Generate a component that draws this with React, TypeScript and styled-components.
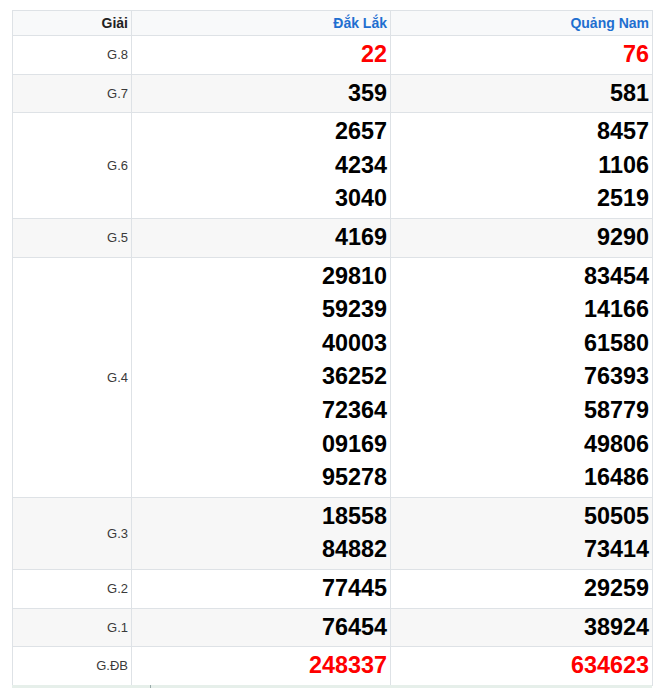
import React from "react";
import styled, { createGlobalStyle } from "styled-components";

const Global = createGlobalStyle`
  html, body { margin: 0; padding: 0; background: #fff; }
  body { font-family: "Liberation Sans", Arial, sans-serif; }
`;

const Wrap = styled.div`
  padding: 10px 11px 0 12px;
`;

const Table = styled.table`
  width: 640px;
  border-collapse: collapse;
  table-layout: fixed;
  font-family: "Liberation Sans", Arial, sans-serif;
`;

const HeadCell = styled.th<{ $blue?: boolean }>`
  border: 1px solid #dee2e6;
  background: #f8f9fa;
  text-align: right;
  font-size: 14px;
  font-weight: bold;
  line-height: 20px;
  padding: 2px 3px 2px 3px;
  color: ${(p) => (p.$blue ? "#1f6fd0" : "#222")};
`;

const Row = styled.tr<{ $alt: boolean }>`
  background: ${(p) => (p.$alt ? "#f7f7f7" : "#fff")};
`;

const Label = styled.td`
  border: 1px solid #dee2e6;
  text-align: right;
  vertical-align: middle;
  font-size: 13px;
  color: #3a3a3a;
  padding: 2px 3px;
`;

const NumCell = styled.td`
  border: 1px solid #dee2e6;
  text-align: right;
  vertical-align: middle;
  padding: 2px 3px 2px 3px;
`;

const Num = styled.div<{ $red?: boolean }>`
  font-size: 23.4px;
  line-height: 33.6px;
  font-weight: bold;
  color: ${(p) => (p.$red ? "#f00" : "#000")};
`;

const Footer = styled.div`
  width: 640px;
  height: 3px;
  background: #e6efea;
  position: relative;
  margin-top: -1px;
`;

const Tick = styled.span`
  position: absolute;
  left: 138px;
  top: 0;
  width: 1px;
  height: 3px;
  background: #9aa;
`;

type Prize = { label: string; a: string[]; b: string[]; red?: boolean };

const data: Prize[] = [
  { label: "G.8", a: ["22"], b: ["76"], red: true },
  { label: "G.7", a: ["359"], b: ["581"] },
  { label: "G.6", a: ["2657", "4234", "3040"], b: ["8457", "1106", "2519"] },
  { label: "G.5", a: ["4169"], b: ["9290"] },
  {
    label: "G.4",
    a: ["29810", "59239", "40003", "36252", "72364", "09169", "95278"],
    b: ["83454", "14166", "61580", "76393", "58779", "49806", "16486"],
  },
  { label: "G.3", a: ["18558", "84882"], b: ["50505", "73414"] },
  { label: "G.2", a: ["77445"], b: ["29259"] },
  { label: "G.1", a: ["76454"], b: ["38924"] },
  { label: "G.ĐB", a: ["248337"], b: ["634623"], red: true },
];

export default function App() {
  return (
    <Wrap>
      <Global />
      <Table>
        <colgroup>
          <col style={{ width: 119 }} />
          <col style={{ width: 259 }} />
          <col style={{ width: 262 }} />
        </colgroup>
        <thead>
          <tr>
            <HeadCell>Giải</HeadCell>
            <HeadCell $blue>Đắk Lắk</HeadCell>
            <HeadCell $blue>Quảng Nam</HeadCell>
          </tr>
        </thead>
        <tbody>
          {data.map((p, i) => (
            <Row key={p.label} $alt={i % 2 === 1}>
              <Label>{p.label}</Label>
              <NumCell>
                {p.a.map((n, j) => (
                  <Num key={j} $red={p.red}>{n}</Num>
                ))}
              </NumCell>
              <NumCell>
                {p.b.map((n, j) => (
                  <Num key={j} $red={p.red}>{n}</Num>
                ))}
              </NumCell>
            </Row>
          ))}
        </tbody>
      </Table>
      <Footer>
        <Tick />
      </Footer>
    </Wrap>
  );
}
